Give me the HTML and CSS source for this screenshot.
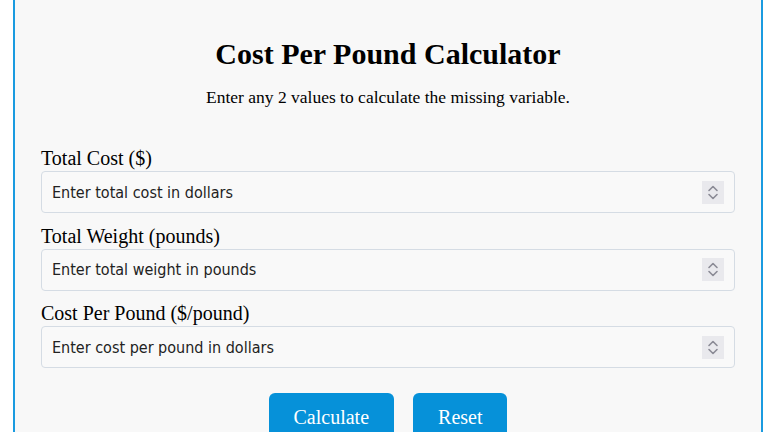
FILE: index.html
```html
<!DOCTYPE html>
<html lang="en">
<head>
<meta charset="utf-8">
<title>Cost Per Pound Calculator</title>
<link rel="stylesheet" href="styles.css">
</head>
<body>
<div class="calculator">
  <h1 class="title">Cost Per Pound Calculator</h1>
  <p class="intro">Enter any 2 values to calculate the missing variable.</p>

  <div class="field">
    <label class="field-label" for="cost">Total Cost ($)</label>
    <div class="number-box">
      <input class="number-input" id="cost" type="text" placeholder="Enter total cost in dollars">
      <span class="spinner"><svg viewBox="0 0 22 23" width="22" height="23"><path d="M7 9.5l4-4 4 4M7 13.5l4 4 4-4" fill="none" stroke="#8a8a95" stroke-width="1.6" stroke-linecap="round" stroke-linejoin="round"/></svg></span>
    </div>
  </div>

  <div class="field">
    <label class="field-label" for="weight">Total Weight (pounds)</label>
    <div class="number-box">
      <input class="number-input" id="weight" type="text" placeholder="Enter total weight in pounds">
      <span class="spinner"><svg viewBox="0 0 22 23" width="22" height="23"><path d="M7 9.5l4-4 4 4M7 13.5l4 4 4-4" fill="none" stroke="#8a8a95" stroke-width="1.6" stroke-linecap="round" stroke-linejoin="round"/></svg></span>
    </div>
  </div>

  <div class="field">
    <label class="field-label" for="cpp">Cost Per Pound ($/pound)</label>
    <div class="number-box">
      <input class="number-input" id="cpp" type="text" placeholder="Enter cost per pound in dollars">
      <span class="spinner"><svg viewBox="0 0 22 23" width="22" height="23"><path d="M7 9.5l4-4 4 4M7 13.5l4 4 4-4" fill="none" stroke="#8a8a95" stroke-width="1.6" stroke-linecap="round" stroke-linejoin="round"/></svg></span>
    </div>
  </div>

  <div class="actions">
    <button class="btn" type="button">Calculate</button>
    <button class="btn" type="button">Reset</button>
  </div>
</div>
</body>
</html>
```
FILE: styles.css
```css
html, body {
  margin: 0;
  padding: 0;
  background: #ffffff;
}

body {
  font-family: "Liberation Serif", "Times New Roman", serif;
  color: #000;
}

/* card is scrolled slightly, so its top edge sits above the viewport */
.calculator {
  box-sizing: border-box;
  width: 750px;
  margin: -12px 0 0 13px;
  padding: 46px 26px 40px;
  background: #f8f8f8;
  border: 2px solid #1a9be0;
  border-radius: 8px;
}

.title {
  margin: 0;
  text-align: center;
  font-size: 30px;
  line-height: 36px;
  font-weight: bold;
}

.intro {
  margin: 14px 0 39px;
  text-align: center;
  font-size: 17.5px;
  line-height: 22px;
}

.field {
  display: flex;
  flex-direction: column;
  gap: 2px;
  margin-bottom: 11.5px;
}

.field-label {
  font-size: 20px;
  line-height: 22px;
}

.number-box {
  display: flex;
  align-items: center;
  height: 42px;
  box-sizing: border-box;
  padding: 0 10px;
  background: #f9f9f9;
  border: 1px solid #d5dce4;
  border-radius: 4px;
}

.number-input {
  flex: 1;
  min-width: 0;
  border: 0;
  padding: 0;
  margin: 0;
  background: transparent;
  font-family: "DejaVu Sans Condensed", "DejaVu Sans", sans-serif;
  font-size: 16px;
  color: #222;
  outline: none;
}

.number-input::placeholder {
  color: #222;
  opacity: 1;
}

.spinner {
  display: flex;
  width: 22px;
  height: 23px;
  background: #e9e9ed;
}

.spinner svg {
  display: block;
}

.actions {
  display: flex;
  justify-content: center;
  gap: 19px;
  margin-top: 25px;
}

.btn {
  font-family: "Liberation Serif", "Times New Roman", serif;
  font-size: 20px;
  line-height: 24px;
  color: #fff;
  background: #0691d9;
  border: 0;
  border-radius: 6px;
  padding: 12px 25px;
}
```
